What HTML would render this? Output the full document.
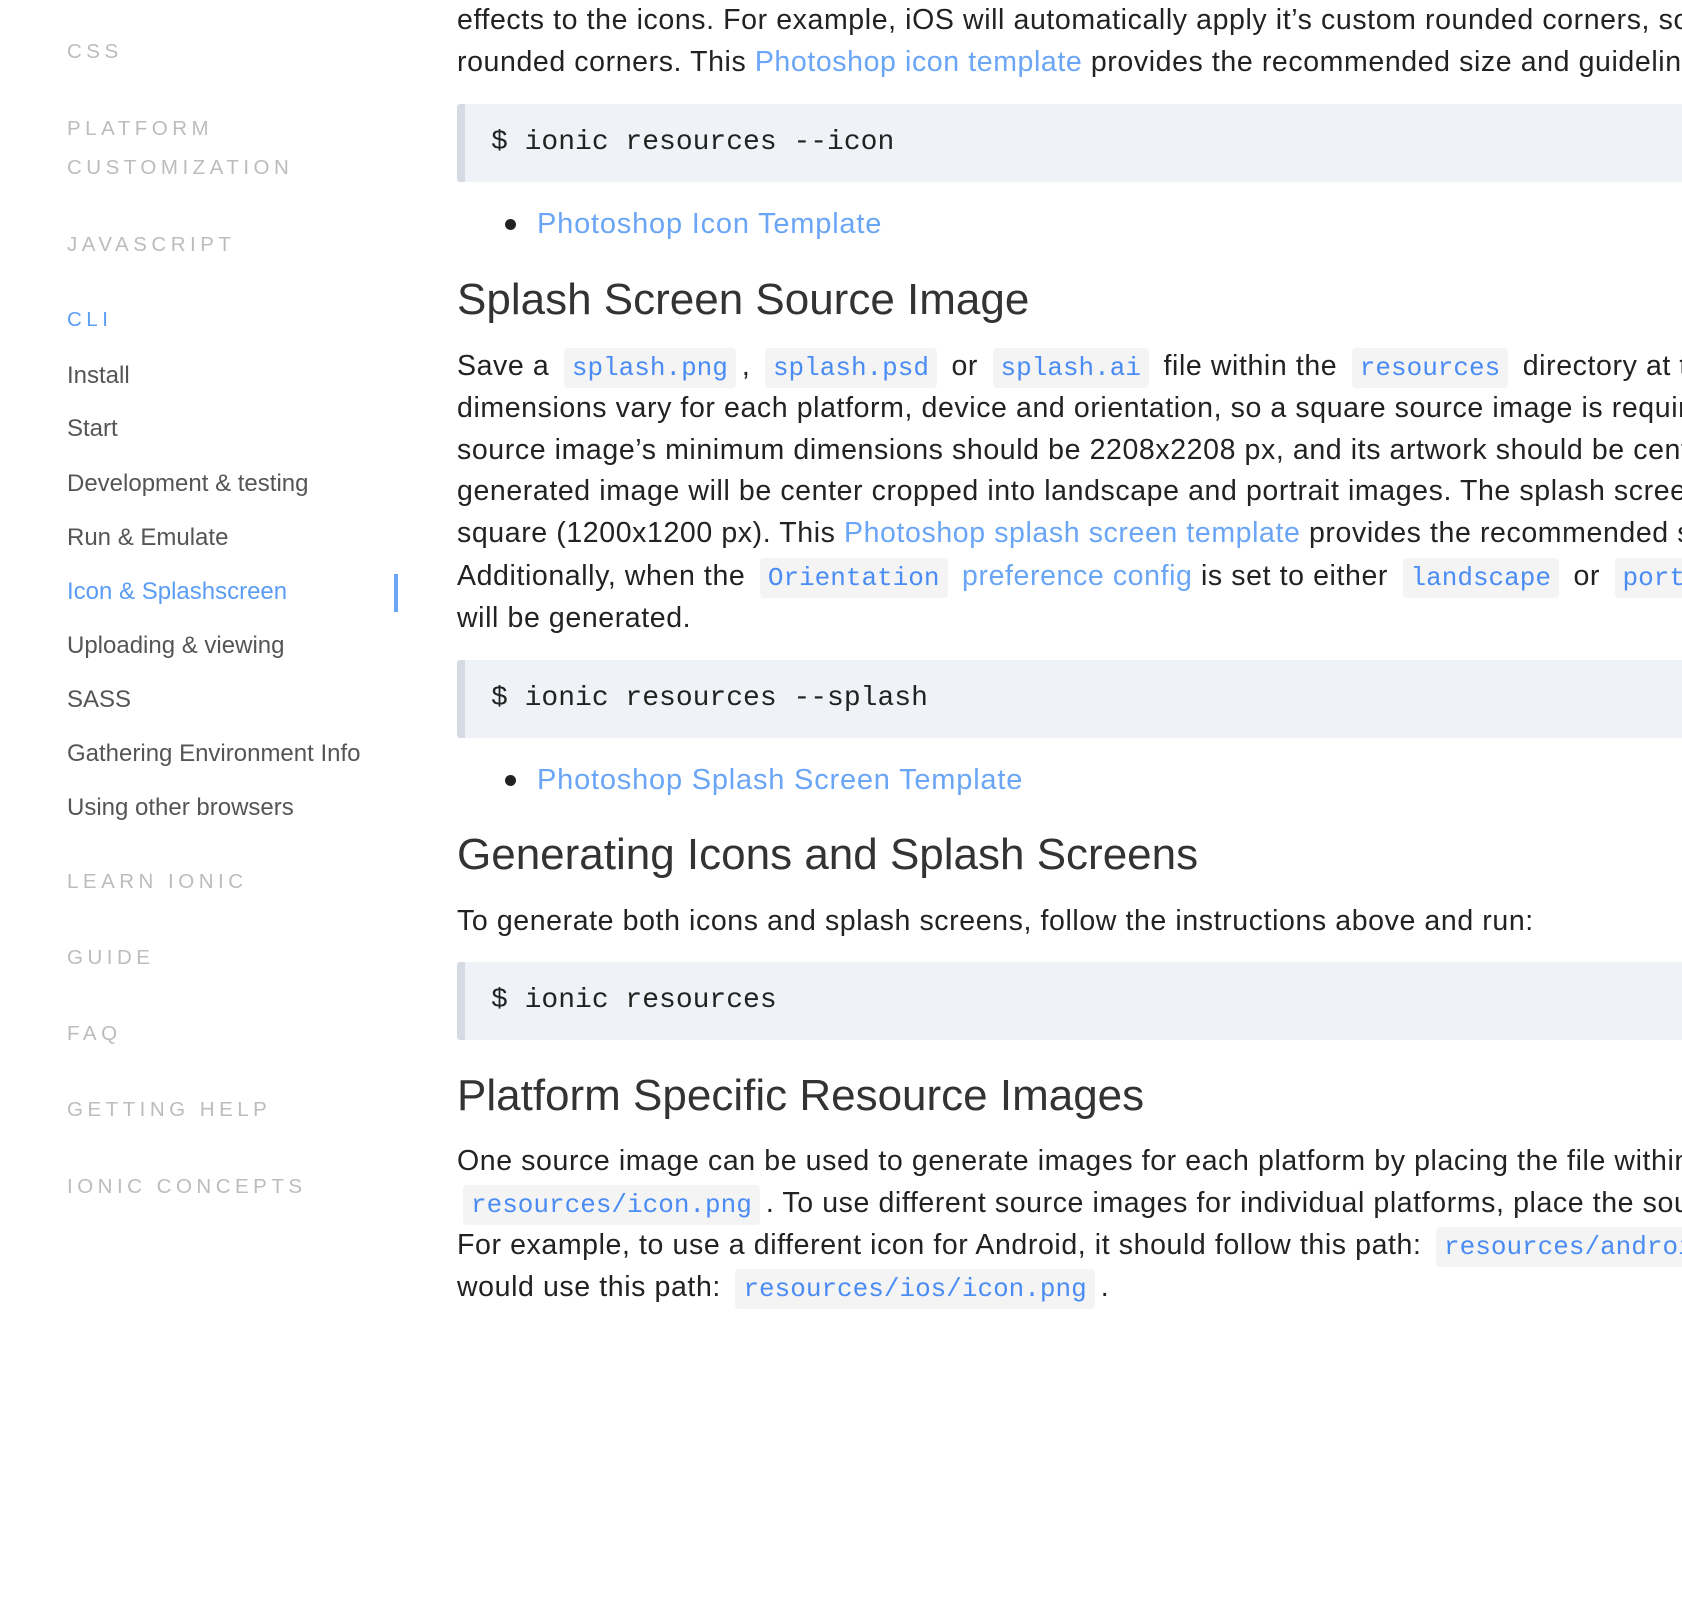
<!DOCTYPE html>
<html><head><meta charset="utf-8"><style>
html,body{margin:0;padding:0;background:#fff;width:1682px;height:1598px;overflow:hidden;position:relative}
#wrap{position:absolute;left:0;top:0;width:1682px;height:1598px;overflow:hidden}
.s{position:absolute;left:67px;font-family:"Liberation Sans",sans-serif;white-space:nowrap}
.h{font-size:20.5px;letter-spacing:4.5px;color:#bcbcbc;line-height:30px}
.i{font-size:24px;color:#555;line-height:30px}
.a{color:#5b9cf5}
.l{position:absolute;left:457px;font-family:"Liberation Sans",sans-serif;font-size:28.5px;letter-spacing:0.6px;color:#222;white-space:nowrap;line-height:42px;height:42px}
a,.lk{color:#6aa5f6;text-decoration:none}
code{font-family:"Liberation Mono",monospace;font-size:26px;letter-spacing:0;color:#4a8cf3;background:#f4f4f5;border-radius:4px;padding:5px 8px;margin:0 6px}
.cb{position:absolute;left:457px;width:1225px;height:78px;background:#eff2f7;border-left:8px solid #d6dbe3;border-radius:3px 0 0 3px;box-sizing:border-box}
.cb span{position:absolute;left:26px;top:0;line-height:78px;font-family:"Liberation Mono",monospace;font-size:28px;color:#222}
.h2{position:absolute;left:457px;font-family:"Liberation Sans",sans-serif;font-size:44px;color:#333;white-space:nowrap;line-height:50px;font-weight:300}
.dot{position:absolute;left:505px;width:11px;height:11px;border-radius:50%;background:#222}
.bl{position:absolute;left:537px;font-family:"Liberation Sans",sans-serif;font-size:29px;letter-spacing:0.8px;color:#6aa5f6;line-height:42px;white-space:nowrap}
</style></head><body><div id="wrap">
<div class="s h" style="top:37px">CSS</div>
<div class="s h" style="top:114px">PLATFORM</div>
<div class="s h" style="top:153px">CUSTOMIZATION</div>
<div class="s h" style="top:230px">JAVASCRIPT</div>
<div class="s h a" style="top:305px">CLI</div>
<div class="s i" style="top:361px">Install</div>
<div class="s i" style="top:414px">Start</div>
<div class="s i" style="top:469px">Development &amp; testing</div>
<div class="s i" style="top:523px">Run &amp; Emulate</div>
<div class="s i a" style="top:577px">Icon &amp; Splashscreen</div>
<div style="position:absolute;left:394px;top:574px;width:4px;height:38px;background:#6aa5f6"></div>
<div class="s i" style="top:631px">Uploading &amp; viewing</div>
<div class="s i" style="top:685px">SASS</div>
<div class="s i" style="top:739px">Gathering Environment Info</div>
<div class="s i" style="top:793px">Using other browsers</div>
<div class="s h" style="top:867px">LEARN IONIC</div>
<div class="s h" style="top:943px">GUIDE</div>
<div class="s h" style="top:1019px">FAQ</div>
<div class="s h" style="top:1095px">GETTING HELP</div>
<div class="s h" style="top:1172px">IONIC CONCEPTS</div>

<div class="l" style="top:-1px">effects to the icons. For example, iOS will automatically apply it’s custom rounded corners, so</div>
<div class="l" style="top:41px">rounded corners. This <span class="lk">Photoshop icon template</span> provides the recommended size and guidelines</div>
<div class="cb" style="top:104px"><span>$ ionic resources --icon</span></div>
<div class="dot" style="top:219px"></div>
<div class="bl" style="top:203px">Photoshop Icon Template</div>
<div class="h2" style="top:275px">Splash Screen Source Image</div>
<div class="l" style="top:345px">Save a <code>splash.png</code>, <code>splash.psd</code> or <code>splash.ai</code> file within the <code>resources</code> directory at the root</div>
<div class="l" style="top:387px">dimensions vary for each platform, device and orientation, so a square source image is required</div>
<div class="l" style="top:429px">source image’s minimum dimensions should be 2208x2208 px, and its artwork should be centered</div>
<div class="l" style="top:470px">generated image will be center cropped into landscape and portrait images. The splash screen's</div>
<div class="l" style="top:512px">square (1200x1200 px). This <span class="lk">Photoshop splash screen template</span> provides the recommended size</div>
<div class="l" style="top:555px">Additionally, when the <code>Orientation</code> <span class="lk">preference config</span> is set to either <code>landscape</code> or <code>portrait</code></div>
<div class="l" style="top:597px">will be generated.</div>
<div class="cb" style="top:660px"><span>$ ionic resources --splash</span></div>
<div class="dot" style="top:775px"></div>
<div class="bl" style="top:759px">Photoshop Splash Screen Template</div>
<div class="h2" style="top:830px">Generating Icons and Splash Screens</div>
<div class="l" style="top:900px">To generate both icons and splash screens, follow the instructions above and run:</div>
<div class="cb" style="top:962px"><span>$ ionic resources</span></div>
<div class="h2" style="top:1071px">Platform Specific Resource Images</div>
<div class="l" style="top:1140px">One source image can be used to generate images for each platform by placing the file within</div>
<div class="l" style="top:1182px"><code>resources/icon.png</code>. To use different source images for individual platforms, place the source</div>
<div class="l" style="top:1224px">For example, to use a different icon for Android, it should follow this path: <code>resources/android/icon.png</code></div>
<div class="l" style="top:1266px">would use this path: <code>resources/ios/icon.png</code>.</div>
</div></body></html>
